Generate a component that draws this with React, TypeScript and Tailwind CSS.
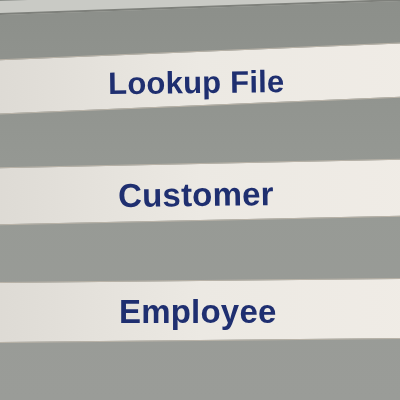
import React from "react";

type Row = {
  label: string;
  size: string;
  tilt: string;
  untilt: string;
  height: string;
};

const rows: Row[] = [
  { label: "Lookup File", size: "text-[31px]", tilt: "-rotate-[2.4deg]", untilt: "rotate-[1.7deg] translate-y-[5px]", height: "h-[55px]" },
  { label: "Customer", size: "text-[33px]", tilt: "-rotate-[1.2deg]", untilt: "rotate-[0.5deg] translate-y-[3px]", height: "h-[58px]" },
  { label: "Employee", size: "text-[33px]", tilt: "-rotate-[0.6deg]", untilt: "rotate-[0.6deg] translate-y-[1px] translate-x-[2px]", height: "h-[61px]" },
];

const MenuBar = ({ label, size, tilt, untilt, height }: Row) => (
  <div
    className={`${tilt} ${height} -mx-6 flex items-center justify-center border-y border-[#b9b3a8] bg-gradient-to-r from-[#dcd9d3] via-[#ece9e3] to-[#f0ece6]`}
  >
    <span className={`${size} ${untilt} pr-2 font-bold tracking-[0.2px] text-[#1f2f70]`}>{label}</span>
  </div>
);

export default function App() {
  return (
    <div
      className="h-[400px] w-[400px] overflow-hidden bg-gradient-to-b from-[#8c8f8a] via-[#979a95] to-[#9a9c98] blur-[0.5px]"
      style={{ fontFamily: '"Liberation Sans", Arial, sans-serif' }}
    >
      <div className="-mx-6 -mt-[6px] h-[14px] -rotate-[2deg] border-b-2 border-[#7e807b] bg-[#c9cac5]" />
      <div className="flex flex-col pt-[43px]">
        <MenuBar {...rows[0]} />
        <div className="h-[57px]" />
        <MenuBar {...rows[1]} />
        <div className="h-[59px]" />
        <MenuBar {...rows[2]} />
      </div>
    </div>
  );
}
